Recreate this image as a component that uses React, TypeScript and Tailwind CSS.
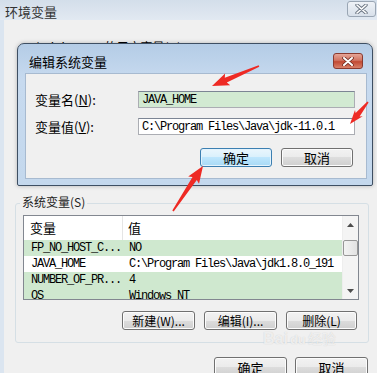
const ui = "font-['Noto_Sans_CJK_SC',sans-serif]"
const mono = "font-['Liberation_Mono','Noto_Sans_CJK_SC',monospace] text-[12px] tracking-[-1.2px]"

const rows = [
  { name: 'FP_NO_HOST_C...', value: 'NO', green: true },
  { name: 'JAVA_HOME', value: 'C:\\Program Files\\Java\\jdk1.8.0_191', green: false },
  { name: 'NUMBER_OF_PR...', value: '4', green: true },
  { name: 'OS', value: 'Windows_NT', green: true },
]

function Btn({
  children,
  className = '',
  primary = false,
}: {
  children: React.ReactNode
  className?: string
  primary?: boolean
}) {
  return (
    <div
      className={`flex items-center justify-center rounded-[3px] border text-[12px] leading-none text-black ${
        primary
          ? 'border-[#3c7fb1] bg-[linear-gradient(#eaf6fd,#d9f0fc_50%,#bee6fd_50%,#a7d9f5)] shadow-[inset_0_0_0_1px_#e3f3fd]'
          : 'border-[#707070] bg-[linear-gradient(#f2f2f2,#ebebeb_50%,#dddddd_50%,#cfcfcf)] shadow-[inset_0_0_0_1px_#fcfcfc]'
      } ${className}`}
    >
      {children}
    </div>
  )
}

function Arrow({ x1, y1, x2, y2, head = 14, width = 12 }: { x1: number; y1: number; x2: number; y2: number; head?: number; width?: number }) {
  const dx = x2 - x1
  const dy = y2 - y1
  const len = Math.hypot(dx, dy)
  const ux = dx / len
  const uy = dy / len
  const nx = -uy
  const ny = ux
  const bx = x2 - ux * head
  const by = y2 - uy * head
  const p = (x: number, y: number) => `${x.toFixed(1)},${y.toFixed(1)}`
  const pts = [
    p(x1 + nx * 0.8, y1 + ny * 0.8),
    p(bx + nx * 2.6, by + ny * 2.6),
    p(bx - ux * 2 + nx * width / 2, by - uy * 2 + ny * width / 2),
    p(x2, y2),
    p(bx - ux * 2 - nx * width / 2, by - uy * 2 - ny * width / 2),
    p(bx - nx * 2.6, by - ny * 2.6),
    p(x1 - nx * 0.8, y1 - ny * 0.8),
  ].join(' ')
  return <polygon points={pts} fill="#ee2a24" />
}

export default function App() {
  return (
    <div className={`relative w-[377px] h-[373px] overflow-hidden bg-[#f0f0f0] ${ui}`}>
      {/* Outer window: 环境变量 */}
      <div className="flex flex-col h-full">
        <div className="h-[20px] flex items-start justify-between bg-[linear-gradient(#d3deea,#e2e9f2)] pl-[5px]">
          <span className="mt-[4px] text-[13px] leading-[16px] text-[#333]">环境变量</span>
          <div className="mt-[1px] mr-[1px] w-[29px] h-[16px] rounded-[3px] border border-[#9aa6b4] bg-[linear-gradient(#eef2f7,#d8e0ea)] flex items-center justify-center">
            <svg width="13" height="10" viewBox="0 0 13 10">
              <path d="M2 1 L11 9 M11 1 L2 9" stroke="#6d7784" strokeWidth="3.4" strokeLinecap="round" />
              <path d="M2 1 L11 9 M11 1 L2 9" stroke="#ffffff" strokeWidth="1.6" strokeLinecap="round" />
            </svg>
          </div>
        </div>

        <div className="flex-1 border-l-[4px] border-[#dbe5f0] pl-[11px] pt-[20px]">
          <div className="h-[14px] pl-[10px] text-[12px] leading-[14px] text-black">Administrator 的用户变量(U)</div>

          {/* 系统变量 group */}
          <div className="mt-[149px] w-[354px] h-[140px] rounded-[3px] border border-[#d5dfe5]">
            <div className="-mt-[10px] ml-[4px] w-fit bg-[#f0f0f0] px-[2px] text-[12px] leading-[16px] text-[#222]">
              系统变量(S)
            </div>

            <div className="mt-[5px] ml-[7px] flex w-[336px] h-[85px] border border-[#828790] bg-white overflow-hidden">
              <div className="flex-1 flex flex-col">
                <div className="h-[24px] flex shrink-0 text-[13px] text-black">
                  <div className="w-[99px] pl-[6px] flex items-center border-r border-[#e5e5e5]">变量</div>
                  <div className="pl-[5px] flex items-center">值</div>
                </div>
                {rows.map((r) => (
                  <div
                    key={r.name}
                    className={`h-[16px] shrink-0 flex items-center ${mono} text-black ${r.green ? 'bg-[#cfe8cf]' : 'bg-white'}`}
                  >
                    <div className="w-[99px] pl-[7px] whitespace-nowrap">{r.name}</div>
                    <div className="pl-[6px] whitespace-nowrap">{r.value}</div>
                  </div>
                ))}
              </div>
              <div className="w-[16px] shrink-0 flex flex-col items-center bg-[#f4f4f4] border-l border-[#eeeeee]">
                <div className="h-[17px] flex items-center justify-center">
                  <svg width="7" height="4" viewBox="0 0 7 4"><path d="M0 4 L3.5 0 L7 4 Z" fill="#4d4d4d" /></svg>
                </div>
                <div className="mt-[7px] w-[15px] h-[16px] rounded-[2px] border border-[#979797] bg-[linear-gradient(90deg,#f3f3f3,#e2e2e2)]" />
                <div className="mt-auto h-[17px] flex items-center justify-center">
                  <svg width="7" height="4" viewBox="0 0 7 4"><path d="M0 0 L3.5 4 L7 0 Z" fill="#4d4d4d" /></svg>
                </div>
              </div>
            </div>

            <div className="mt-[11px] mr-[11px] flex justify-end gap-[9px]">
              <Btn className="w-[73px] h-[19px]">新建(W)...</Btn>
              <Btn className="w-[73px] h-[19px]">编辑(I)...</Btn>
              <Btn className="w-[71px] h-[19px]">删除(L)</Btn>
            </div>
          </div>

          <div className="mt-[14px] mr-[9px] flex justify-end gap-[8px]">
            <Btn className="w-[73px] h-[20px] text-[13px]">确定</Btn>
            <Btn className="w-[73px] h-[20px] text-[13px]">取消</Btn>
          </div>
        </div>
      </div>

      {/* Dialog: 编辑系统变量 */}
      <div className="absolute left-[17px] top-[43px] w-[356px] h-[143px] flex flex-col rounded-t-[7px] rounded-b-[2px] border border-[#3e4f63] bg-[linear-gradient(#b4cce6,#c7daef_25%,#c4d8ed)] shadow-[0_0_4px_rgba(0,0,0,0.25)]">
        <div className="h-[29px] flex items-start justify-between pl-[11px] pr-[9px] shrink-0">
          <span className="mt-[10px] text-[13px] leading-[16px] text-black">编辑系统变量</span>
          <div className="mt-[9px] w-[30px] h-[16px] rounded-[3px] border border-[#8a3a30] bg-[linear-gradient(#e6a597,#d17462_45%,#c24a34_55%,#d8806a)] flex items-center justify-center">
            <svg width="12" height="9" viewBox="0 0 12 9">
              <path d="M2 1 L10 8 M10 1 L2 8" stroke="#6f2a20" strokeWidth="3.6" strokeLinecap="round" />
              <path d="M2 1 L10 8 M10 1 L2 8" stroke="#ffffff" strokeWidth="2" strokeLinecap="round" />
            </svg>
          </div>
        </div>

        <div className="flex-1 ml-[7px] mr-[5px] mb-[6px] border border-[#a7bad0] bg-[#f0f0f0] flex flex-col">
          <div className="mt-[17px] flex items-center">
            <div className="w-[112px] pl-[9px] text-[13px] leading-none text-black whitespace-nowrap">
              变量名(<span className="underline">N</span>):
            </div>
            <div className={`w-[217px] h-[17px] border border-[#abadb3] border-t-[#7c8594] bg-[#d2ead2] pl-[3px] flex items-center ${mono} text-black`}>
              JAVA_HOME
            </div>
          </div>
          <div className="mt-[10px] flex items-center">
            <div className="w-[112px] pl-[9px] text-[13px] leading-none text-black whitespace-nowrap">
              变量值(<span className="underline">V</span>):
            </div>
            <div className={`w-[217px] h-[17px] border border-[#abadb3] border-t-[#7c8594] bg-white pl-[3px] flex items-center ${mono} text-black`}>
              C:\Program Files\Java\jdk-11.0.1
            </div>
          </div>
          <div className="mt-[13px] pr-[13px] flex justify-end gap-[9px]">
            <Btn primary className="w-[72px] h-[19px] text-[13px]">确定</Btn>
            <Btn className="w-[72px] h-[19px] text-[13px]">取消</Btn>
          </div>
        </div>
      </div>

      {/* Baidu watermark */}
      <div className="absolute left-[263px] top-[331px] flex items-baseline gap-[2px] text-[16px] font-bold leading-none text-white/70 [text-shadow:0_0_1px_#c4c4c4] font-['Liberation_Sans','Noto_Sans_CJK_SC',sans-serif]">
        <span>Bai</span>
        <span className="text-[13px]">du</span>
        <span className="text-[14px] font-normal">经验</span>
      </div>

      {/* red arrows */}
      <svg className="absolute inset-0 pointer-events-none" width="377" height="373" viewBox="0 0 377 373">
        <Arrow x1={259} y1={66} x2={212} y2={86} head={15} width={13} />
        <Arrow x1={368} y1={102} x2={350} y2={124} head={12} width={10} />
        <Arrow x1={173} y1={211} x2={203} y2={166} head={15} width={13} />
      </svg>
    </div>
  )
}
